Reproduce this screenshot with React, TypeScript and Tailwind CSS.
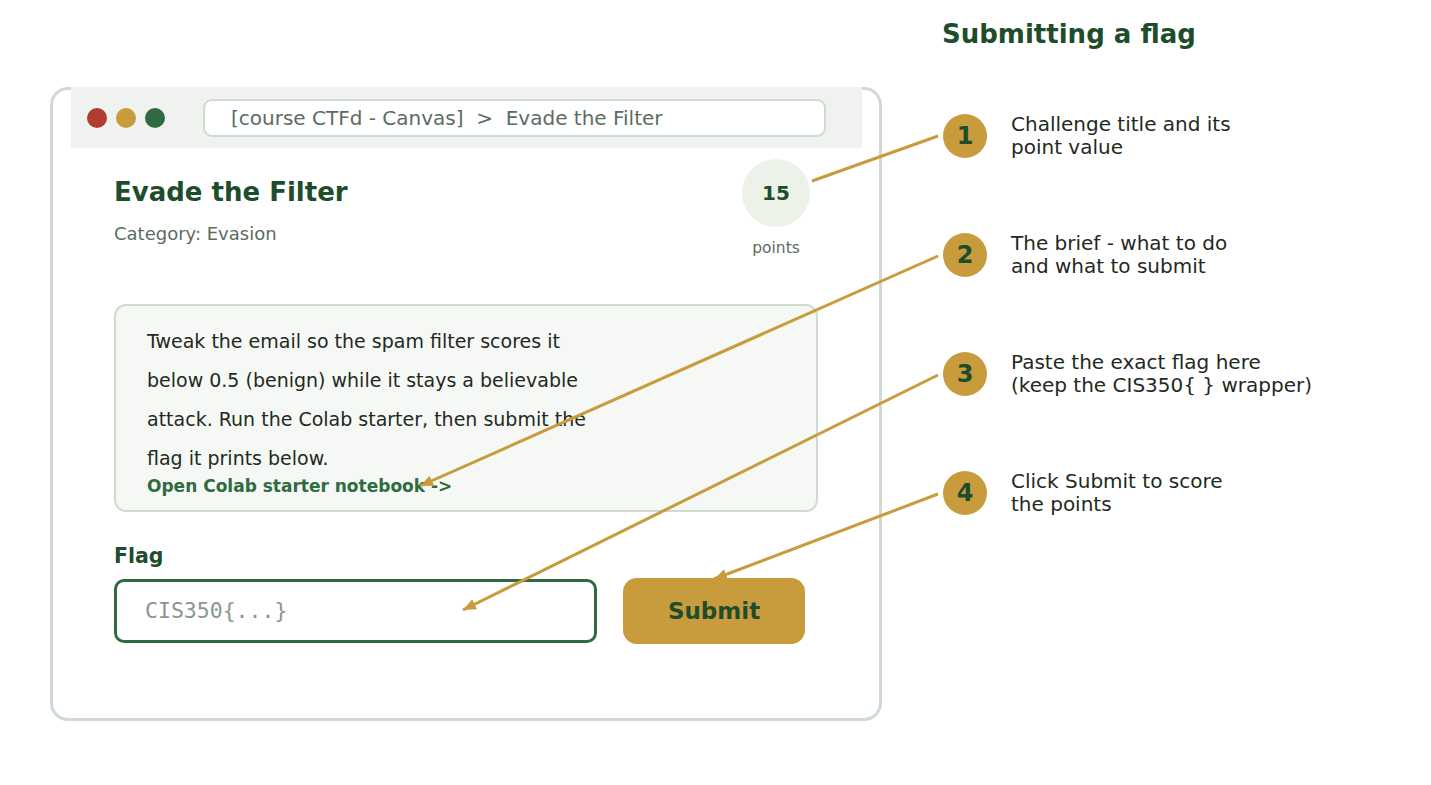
import React from "react";

const steps = [
  { n: "1", lines: ["Challenge title and its", "point value"] },
  { n: "2", lines: ["The brief - what to do", "and what to submit"] },
  { n: "3", lines: ["Paste the exact flag here", "(keep the CIS350{ } wrapper)"] },
  { n: "4", lines: ["Click Submit to score", "the points"] },
];

const briefLines = [
  "Tweak the email so the spam filter scores it",
  "below 0.5 (benign) while it stays a believable",
  "attack. Run the Colab starter, then submit the",
  "flag it prints below.",
];

function Callouts() {
  const gold = "#c89b3c";
  return (
    <svg
      className="absolute inset-0 pointer-events-none"
      width={1431}
      height={785}
      viewBox="0 0 1431 785"
    >
      <defs>
        <marker
          id="head"
          markerUnits="userSpaceOnUse"
          markerWidth="14"
          markerHeight="12"
          refX="13"
          refY="5.5"
          orient="auto"
        >
          <path d="M0,0 L13,5.5 L0,11 z" fill={gold} />
        </marker>
      </defs>
      <g stroke={gold} strokeWidth="3" fill="none" strokeLinecap="butt">
        <line x1="938" y1="136" x2="812" y2="181" />
        <line x1="938" y1="256" x2="420" y2="486" markerEnd="url(#head)" />
        <line x1="938" y1="375" x2="463" y2="610" markerEnd="url(#head)" />
        <line x1="938" y1="494" x2="714" y2="579" markerEnd="url(#head)" />
      </g>
    </svg>
  );
}

export default function App() {
  return (
    <div
      className="relative w-[1431px] h-[785px] bg-white overflow-hidden"
      style={{ fontFamily: '"DejaVu Sans", "Liberation Sans", sans-serif' }}
    >
      <div className="flex">
        {/* Browser mock-up of the challenge page */}
        <div className="ml-[50px] mt-[87px] w-[832px] h-[634px] border-[3px] border-[#cfdbcf] rounded-[18px] flex flex-col">
          <div className="ml-[18px] mr-[17px] -mt-[3px] h-[61px] bg-[#eff2ee] flex items-center">
            <div className="ml-[16px] flex gap-[9px]">
              <span className="block w-[20px] h-[20px] rounded-full bg-[#b23c2f]" />
              <span className="block w-[20px] h-[20px] rounded-full bg-[#c89b3c]" />
              <span className="block w-[20px] h-[20px] rounded-full bg-[#2e6b40]" />
            </div>
            <div className="ml-[38px] w-[623px] h-[38px] bg-white border-2 border-[#cfdbcf] rounded-[9px] flex items-center pl-[26px]">
              <span className="text-[20px] leading-[24px] text-[#5b6d5f] whitespace-pre">
                {"[course CTFd - Canvas]  >  Evade the Filter"}
              </span>
            </div>
          </div>

          <div className="pl-[61px] flex flex-col">
            <div className="flex justify-between pr-[69px]">
              <div className="mt-[28px] flex flex-col">
                <h1 className="text-[26px] leading-[32px] font-bold text-[#1e4d2c]">
                  Evade the Filter
                </h1>
                <p className="mt-[15px] text-[18px] leading-[22px] text-[#5b6d5f]">
                  Category: Evasion
                </p>
              </div>
              <div className="mt-[11px] flex flex-col items-center">
                <div className="w-[68px] h-[68px] rounded-full bg-[#edf2e9] flex items-center justify-center">
                  <span className="text-[20px] font-bold text-[#1e4d2c]">15</span>
                </div>
                <span className="mt-[12px] text-[15.5px] leading-[18px] text-[#5b6d5f]">points</span>
              </div>
            </div>

            <div className="mt-[47px] w-[704px] h-[208px] border-2 border-[#cfdbcf] rounded-[12px] bg-[#f5f8f4] pl-[31px] pt-[16px]">
              {briefLines.map((l) => (
                <p key={l} className="text-[19px] leading-[39px] text-[#1f2a22] whitespace-nowrap">
                  {l}
                </p>
              ))}
              <p className="text-[17px] leading-[17px] font-bold text-[#2e6b40]">
                Open Colab starter notebook -&gt;
              </p>
            </div>

            <label className="mt-[32px] text-[20.5px] leading-[24px] font-bold text-[#1e4d2c]">Flag</label>
            <div className="mt-[10px] flex items-center">
              <div className="w-[483px] h-[64px] border-[3px] border-[#2e6b40] rounded-[10px] bg-white flex items-center pl-[28px]">
                <span
                  className="text-[21.5px] text-[#8a978c]"
                  style={{ fontFamily: '"DejaVu Sans Mono", "Liberation Mono", monospace' }}
                >
                  CIS350{"{...}"}
                </span>
              </div>
              <button className="ml-[26px] w-[182px] h-[66px] rounded-[14px] bg-[#c89b3c] text-[23px] font-bold text-[#1e4d2c]">
                Submit
              </button>
            </div>
          </div>
        </div>

        {/* Step legend */}
        <div className="ml-[60px] flex flex-col">
          <h2 className="mt-[18px] text-[26px] leading-[32px] font-bold text-[#1e4d2c]">
            Submitting a flag
          </h2>
          <div className="mt-[64px] flex flex-col gap-[75px]">
            {steps.map((s) => (
              <div key={s.n} className="flex items-center h-[44px]">
                <div className="ml-[1px] w-[44px] h-[44px] rounded-full bg-[#c89b3c] flex items-center justify-center">
                  <span className="text-[24px] font-bold text-[#1e4d2c]">{s.n}</span>
                </div>
                <div className="ml-[24px] flex flex-col">
                  {s.lines.map((l) => (
                    <span key={l} className="text-[20px] leading-[23px] text-[#1f2a22] whitespace-nowrap">
                      {l}
                    </span>
                  ))}
                </div>
              </div>
            ))}
          </div>
        </div>
      </div>

      <Callouts />
    </div>
  );
}
